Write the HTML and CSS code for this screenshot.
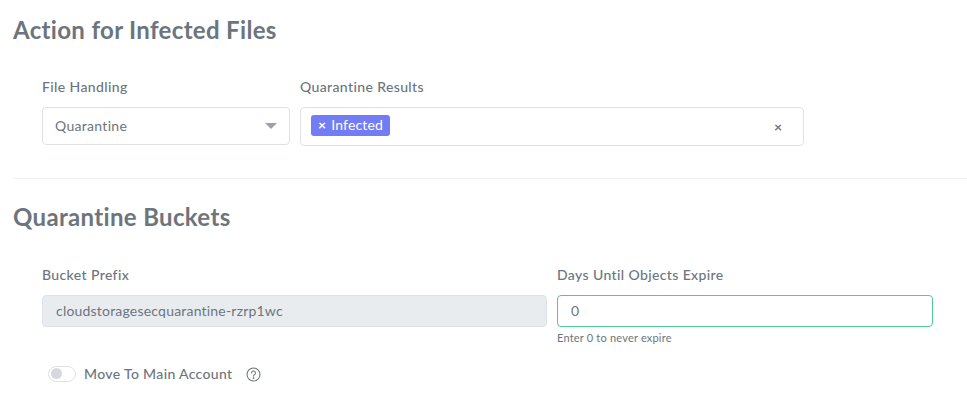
FILE: index.html
```html
<!DOCTYPE html>
<html lang="en">
<head>
<meta charset="utf-8">
<title>Action for Infected Files</title>
<link rel="stylesheet" href="styles.css">
</head>
<body>
<main class="page">
  <section class="section section-first">
    <h2 class="heading">Action for Infected Files</h2>
    <div class="row row-top">
      <div class="field field-handling">
        <label class="label">File Handling</label>
        <div class="control select">
          <span>Quarantine</span>
          <span class="caret"></span>
        </div>
      </div>
      <div class="field field-results">
        <label class="label">Quarantine Results</label>
        <div class="control multi">
          <span class="tag"><span class="tag-x">×</span>Infected</span>
          <span class="clear">×</span>
        </div>
      </div>
    </div>
  </section>
  <hr class="divider">
  <section class="section">
    <h2 class="heading">Quarantine Buckets</h2>
    <div class="row row-bottom">
      <div class="field field-prefix">
        <label class="label">Bucket Prefix</label>
        <div class="control input disabled">cloudstoragesecquarantine-rzrp1wc</div>
      </div>
      <div class="field field-days">
        <label class="label">Days Until Objects Expire</label>
        <div class="control input valid">0</div>
        <div class="help">Enter 0 to never expire</div>
      </div>
    </div>
    <div class="toggle-row">
      <span class="toggle"><span class="knob"></span></span>
      <span class="toggle-label">Move To Main Account</span>
      <svg class="help-icon" viewBox="0 0 16 16" width="15" height="15" fill="none" stroke="#6c757d" stroke-width="1.1" stroke-linecap="round">
        <circle cx="8" cy="8" r="6.9"/>
        <path d="M5.9 6.3a2.1 2.1 0 1 1 3.3 1.7c-.8.5-1.2.9-1.2 1.8"/>
        <circle cx="8" cy="11.8" r=".45" fill="#6c757d"/>
      </svg>
    </div>
  </section>
</main>
</body>
</html>
```
FILE: styles.css
```css
* { box-sizing: border-box; }
html, body { margin: 0; padding: 0; height: 100%; }
body {
  background: #fff;
  color: #6c757d;
  font-family: "Lato", "Open Sans", sans-serif;
  font-size: 14px;
  overflow: hidden;
}
.page { padding: 16px 0 0 13px; }
.heading {
  margin: 0;
  font-size: 24px;
  line-height: 28px;
  font-weight: 700;
  letter-spacing: .33px;
  color: #6c757d;
}
.row { display: flex; gap: 10px; padding-left: 29px; }
.row-top { margin-top: 33px; }
.row-bottom { margin-top: 34px; }
.field { display: flex; flex-direction: column; }
.field-handling { width: 248px; }
.field-results { width: 504px; }
.field-prefix { width: 505px; }
.field-days { width: 376px; }
.label {
  display: block;
  font-size: 14px;
  line-height: 20px;
  font-weight: 500;
  margin-bottom: 10px;
  letter-spacing: .38px;
}
.control {
  display: flex;
  align-items: center;
  border: 1px solid #dee2e6;
  border-radius: 4px;
  background: #fff;
  font-size: 14px;
}
.select {
  height: 38px;
  padding: 0 12px 1px;
  justify-content: space-between;
  letter-spacing: .3px;
}
.caret {
  width: 0;
  height: 0;
  border-left: 6px solid transparent;
  border-right: 6px solid transparent;
  border-top: 6px solid #9aa1a9;
}
.multi {
  height: 39px;
  padding: 0 21px 0 10px;
  justify-content: space-between;
}
.tag {
  display: inline-flex;
  align-items: center;
  height: 21px;
  padding: 0 7px 2px;
  border-radius: 3px;
  background: #727cf5;
  color: #fff;
  font-size: 14px;
  margin-top: -2px;
  letter-spacing: .15px;
}
.tag-x { font-weight: 700; margin-right: 5px; }
.clear { font-weight: 700; font-size: 14px; color: #6c757d; }
.input {
  height: 32px;
  padding: 0 13px 2px;
  letter-spacing: .2px;
}
.disabled { background: #e9ecef; }
.valid { border-color: #4fc997; }
.help {
  margin-top: 3px;
  font-size: 11px;
  line-height: 15px;
  letter-spacing: .2px;
}
.divider {
  margin: 32px 0 24px;
  border: 0;
  border-top: 1px solid #eef2f7;
}
.toggle-row {
  display: flex;
  align-items: center;
  margin-top: 20px;
  margin-left: 35px;
}
.toggle {
  display: inline-flex;
  align-items: center;
  width: 28px;
  height: 16px;
  padding: 0 2px;
  border: 1px solid #dee2e6;
  border-radius: 8px;
  background: #fff;
}
.knob {
  width: 11px;
  height: 11px;
  border-radius: 50%;
  background: #d5d8dd;
}
.toggle-label { margin-left: 8px; font-weight: 500; letter-spacing: .35px; }
.help-icon { margin-left: 13px; margin-top: 2px; }
```
